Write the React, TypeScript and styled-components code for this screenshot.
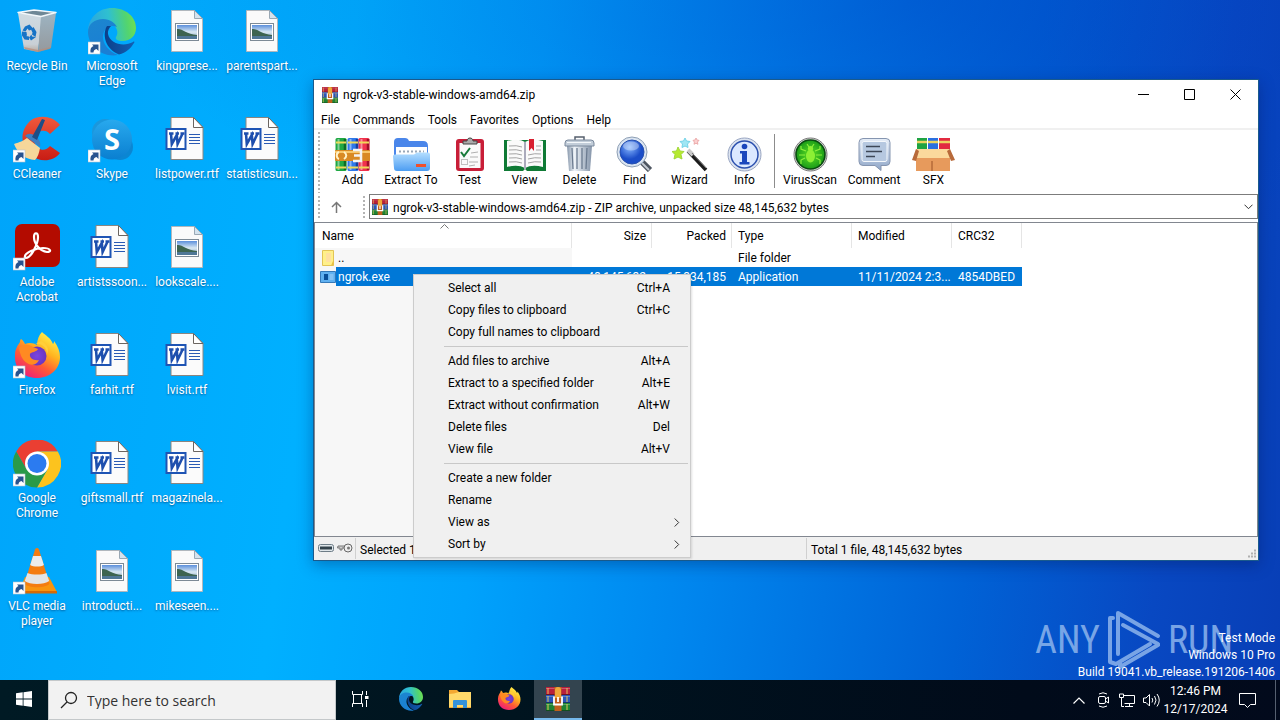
import React from 'react';
import styled, { createGlobalStyle, css } from 'styled-components';

const UI = `Roboto, "Open Sans", sans-serif`;

const Global = createGlobalStyle`
  * { box-sizing: border-box; }
  body { margin: 0; font-family: ${UI}; font-size: 12px; line-height: 16px; color: #000; }
  button, input { font: inherit; color: inherit; margin: 0; padding: 0; border: 0; background: none; text-align: inherit; }
  svg { display: block; flex: none; }
`;

/* ---------- desktop ---------- */

const Screen = styled.div`
  display: flex;
  flex-direction: column;
  min-height: 100vh;
`;

const Desktop = styled.main`
  position: relative;
  flex: 1;
  overflow: hidden;
  background:
    radial-gradient(ellipse 62% 40% at 72% 0, rgba(0, 60, 190, 0.4), rgba(0, 60, 190, 0)),
    linear-gradient(98deg, #00a4fa 0%, #00b0ff 26%, #00a2fc 40%, #0086ee 56%, #0062d6 76%, #0848c2 90%, #083eb6 100%);
`;

const Shortcuts = styled.div`
  display: grid;
  grid-auto-flow: column;
  grid-template-rows: repeat(6, 108px);
  grid-auto-columns: 75px;
  padding-top: 8px;
`;

const Shortcut = styled.button<{ $row: number; $col: number }>`
  grid-row: ${(p) => p.$row};
  grid-column: ${(p) => p.$col};
  display: flex;
  flex-direction: column;
  align-items: center;
  width: 74px;
  gap: 3px;
`;

const ShortcutLabel = styled.span`
  color: #fff;
  line-height: 15px;
  text-align: center;
  white-space: pre;
  text-shadow: 0 1px 2px rgba(0, 40, 90, 0.6);
`;

const Brand = styled.div`
  position: absolute;
  right: 47px;
  bottom: 10px;
  display: flex;
  align-items: center;
  gap: 6px;
  color: #8cb4ec;
  opacity: 0.85;
  font-family: "Roboto Condensed", Roboto, sans-serif;
  font-size: 38px;
  font-weight: 400;
  line-height: 60px;
`;

const BuildInfo = styled.div`
  position: absolute;
  right: 5px;
  bottom: -1px;
  color: #fff;
  text-align: right;
  line-height: 17px;
`;

/* ---------- archive window ---------- */

const Window = styled.section`
  position: absolute;
  left: 313px;
  right: 21px;
  top: 79px;
  bottom: 119px;
  display: flex;
  flex-direction: column;
  border: 1px solid #1a5a8c;
  background: #fff;
  box-shadow: 0 4px 14px rgba(0, 20, 80, 0.35);
`;

const TitleBar = styled.header`
  display: flex;
  align-items: center;
  height: 29px;
  padding-left: 8px;
`;

const Title = styled.h1`
  flex: 1;
  margin: 0 0 0 5px;
  font-size: 12px;
  font-weight: 400;
`;

const CaptionButton = styled.button`
  display: grid;
  place-items: center;
  width: 46px;
  height: 29px;
`;

const MenuBar = styled.nav`
  display: flex;
  align-items: center;
  height: 21px;
  padding: 2px 7px 0;
  gap: 13px;
  border-bottom: 2px solid #f0f0f0;
`;

const ToolBar = styled.div`
  display: flex;
  height: 63px;
  padding: 0 4px;
`;

const Grip = styled.span`
  width: 2px;
  margin-top: 2px;
  background: repeating-linear-gradient(#b4b4b4 0 2px, #fff 2px 4px);
`;

const Tools = styled.div`
  display: flex;
  padding-left: 5px;
`;

const Tool = styled.button<{ $width?: number }>`
  display: flex;
  flex-direction: column;
  align-items: center;
  width: ${(p) => p.$width ?? 55}px;
  padding-top: 6px;
  white-space: nowrap;
`;

const ToolIcon = styled.span`
  display: grid;
  place-items: center;
  height: 36px;
`;

const ToolDivider = styled.span`
  width: 1px;
  height: 54px;
  margin: 4px 3px 0 2px;
  background: #8c8c8c;
`;

const AddressBar = styled.div`
  display: flex;
  height: 29px;
  padding: 1px 0 3px 4px;
`;

const UpButton = styled.button`
  display: grid;
  place-items: center;
  width: 43px;
  padding-right: 11px;
`;

const AddressBox = styled.div`
  flex: 1;
  display: flex;
  align-items: center;
  height: 25px;
  margin-left: 4px;
  padding-left: 2px;
  gap: 5px;
  border: 1px solid #7c7c7c;
`;

const AddressInput = styled.input`
  flex: 1;
  min-width: 0;
  padding-top: 2px;
  outline: 0;
`;

const DropButton = styled.button`
  display: grid;
  place-items: center;
  width: 17px;
  height: 23px;
`;

const FileArea = styled.div`
  flex: 1;
  min-height: 0;
  border: 1px solid #828790;
  background: linear-gradient(#f7f7f7, #f7f7f7) 0 25px / 257px 100% no-repeat #fff;
`;

const FileTable = styled.table`
  table-layout: fixed;
  width: 707px;
  border-collapse: separate;
  border-spacing: 0;
`;

const HeadCell = styled.th<{ $right?: boolean; $sorted?: boolean }>`
  height: 25px;
  padding: ${(p) => (p.$right ? '0 5px 0 0' : '0 0 0 6px')};
  border-right: 1px solid #e5e5e5;
  background: #fff;
  font-weight: 400;
  text-align: ${(p) => (p.$right ? 'right' : 'left')};
  ${(p) => p.$sorted && css`
    padding-left: 7px;
    background: #fff url("data:image/svg+xml,%3Csvg xmlns='http://www.w3.org/2000/svg' width='9' height='5'%3E%3Cpath d='M.5 4.500L4.500.5l4 4' fill='none' stroke='%23777'/%3E%3C/svg%3E") 125px 1px no-repeat;
  `}
`;

const Cell = styled.td<{ $right?: boolean; $name?: boolean; $selected?: boolean }>`
  height: 19px;
  padding: ${(p) => (p.$name ? '0' : p.$right ? '2px 6px 0 0' : '2px 6px 0')};
  line-height: 17px;
  text-align: ${(p) => (p.$right ? 'right' : 'left')};
  white-space: nowrap;
  overflow: hidden;
  text-overflow: clip;
  ${(p) => p.$selected && css`
    color: #fff;
    background: ${p.$name ? 'none' : '#0078d7'};
  `}
`;

const NameCell = styled.div<{ $selected?: boolean }>`
  display: flex;
  align-items: center;
  padding-left: 5px;
  > span {
    flex: 1;
    padding: 2px 0 0 2px;
    background: ${(p) => (p.$selected ? '#0078d7' : 'none')};
  }
`;

const StatusBar = styled.footer`
  display: flex;
  align-items: center;
  height: 23px;
  background: #f0f0f0;
`;

const StatusPane = styled.div<{ $grow?: boolean; $icons?: boolean }>`
  display: flex;
  align-items: center;
  gap: 3px;
  height: 21px;
  padding: ${(p) => (p.$icons ? '0 3px 2px 4px' : '2px 0 0 4px')};
  width: ${(p) => (p.$icons ? '42px' : p.$grow ? 'auto' : '451px')};
  flex: ${(p) => (p.$grow ? 1 : 'none')};
  border-right: ${(p) => (p.$grow ? 0 : '1px solid #d0d0d0')};
`;

/* ---------- context menu ---------- */

const Popup = styled.div`
  position: absolute;
  left: 413px;
  top: 274px;
  display: flex;
  flex-direction: column;
  width: 278px;
  padding: 2px;
  border: 1px solid #ccc;
  background: #f0f0f0;
  box-shadow: 1px 1px 2px rgba(0, 0, 0, 0.12);
`;

const PopupItem = styled.button`
  display: flex;
  align-items: center;
  justify-content: space-between;
  height: 22px;
  padding: 0 18px 0 32px;
`;

const SubArrow = styled.svg`
  margin-right: -10px;
`;

const PopupRule = styled.hr`
  width: 244px;
  height: 1px;
  margin: 3px 0 3px auto;
  border: 0;
  background: #c8c8c8;
`;

/* ---------- taskbar ---------- */

const TaskBar = styled.footer`
  display: flex;
  height: 40px;
  background: linear-gradient(90deg, #001a24 0%, #00141f 40%, #010b1a 80%, #020a1c 100%);
  color: #fff;
`;

const TaskButton = styled.button<{ $active?: boolean }>`
  display: grid;
  place-items: center;
  width: 48px;
  border-bottom: 2px solid ${(p) => (p.$active ? '#76b9ed' : 'transparent')};
  background: ${(p) => (p.$active ? '#33444f' : 'none')};
`;

const PinnedApps = styled.nav`
  display: flex;
  gap: 1px;
  margin-left: 3px;
`;

const SearchBox = styled.label`
  display: flex;
  align-items: center;
  width: 288px;
  padding-left: 11px;
  gap: 9px;
  border: 1px solid #c4c8ca;
  background: #f2f2f2;
  color: #222;
`;

const SearchInput = styled.input`
  flex: 1;
  min-width: 0;
  padding-top: 2px;
  outline: 0;
  font-size: 14px;
  font-family: "Open Sans", sans-serif;
  &::placeholder { color: #333; opacity: 1; }
`;

const Tray = styled.div`
  display: flex;
  margin-left: auto;
`;

const TrayButton = styled.button<{ $wide?: boolean }>`
  display: grid;
  place-items: center;
  width: ${(p) => (p.$wide ? 38 : 24)}px;
`;

const Clock = styled.button`
  width: 65px;
  line-height: 18px;
  text-align: center;
  white-space: nowrap;
`;

const ShowDesktop = styled.button`
  width: 5px;
  margin-left: 9px;
  border-left: 1px solid #566070;
`;

/* ---------- drawings ---------- */

const LinkArrow = () => (
  <g>
    <rect x="0" y="34" width="12" height="12" fill="#fff" stroke="#b8c4d0" strokeWidth=".6" />
    <path d="M2.500 44.500c-.5-3.500.5-5.500 3-6.500L4 36.500h6.500V43L8.500 41C6.500 41.500 5.500 42.500 5.500 44.500z" fill="#28538f" />
  </g>
);

const RecycleBin = () => (
  <svg width="48" height="48" viewBox="0 0 48 48">
    <defs>
      <linearGradient id="binL" x2="0" y2="1"><stop stopColor="#cfdbe2" /><stop offset=".8" stopColor="#c9d0d6" /><stop offset="1" stopColor="#b9a99c" /></linearGradient>
      <linearGradient id="binR" x2="0" y2="1"><stop stopColor="#9db4c2" /><stop offset="1" stopColor="#95999d" /></linearGradient>
    </defs>
    <path d="M5 5l24 3-4 36-14-3z" fill="url(#binL)" />
    <path d="M43 5L28 8l-3 36 13-4z" fill="url(#binR)" />
    <path d="M5 4.500l16-2.500 22 2.500-15 4z" fill="#6f8896" stroke="#f2f7fa" strokeWidth="1.500" strokeLinejoin="round" />
    <path d="M11 39l14 3 13-3-1 2-12 3-13-3z" fill="#b98c78" opacity=".7" />
    <g fill="#1673c6">
      <path d="M12 18.500l4.500-2 4 4.500-4.500 1.500-1.500-2-2 3-3-1z" />
      <path d="M20.500 19l3 5-1 5-3.500-2.500.5-2-1.500-3z" />
      <path d="M23 29l-5 3.500-2-3 2.500-3 .5 2z" />
      <path d="M9 23.500l4.500.5.5 3.500-1 .500 3 .500v3.500l-4.500-.5-2.500-4z" />
    </g>
  </svg>
);

const EdgeLogo = ({ size = 48, link = false }) => (
  <svg width={size} height={size} viewBox="0 0 48 48">
    <defs>
      <linearGradient id={`eg${size}`} x1="0" y1=".5" x2="1" y2=".4"><stop stopColor="#2aa5e0" /><stop offset=".45" stopColor="#2fc0d0" /><stop offset=".8" stopColor="#52d470" /><stop offset="1" stopColor="#6fe052" /></linearGradient>
      <linearGradient id={`eb${size}`} x2=".3" y2="1"><stop stopColor="#1c86cf" /><stop offset="1" stopColor="#1a7fd4" /></linearGradient>
      <linearGradient id={`ed${size}`} x2="1"><stop stopColor="#0c3f8a" /><stop offset="1" stopColor="#1260b4" /></linearGradient>
    </defs>
    <path d="M0 22C1 9 11 0 24 0c14 0 24 9 24 20 0 8-6 13-13 13-6 0-8-2-7-4 3-4 1-11-5-14-9-4-18-1-23 7z" fill={`url(#eg${size})`} />
    <path d="M0 24c0-8 7-13 15-13 7 0 12 4 14 8-4-2-9-1-12 3-5 7-1 20 13 25C14 50 0 38 0 24z" fill={`url(#eb${size})`} />
    <path d="M19 18c-5 8-2 23 12 28.500C38 45 43 40 46 35c1-1 0-2-1-1-9 5-23 2-25-8-.5-3 1-6 3-8z" fill={`url(#ed${size})`} />
    {link && <LinkArrow />}
  </svg>
);

const ImageFile = () => (
  <svg width="48" height="48" viewBox="0 0 48 48">
    <defs><linearGradient id="sky" x2="0" y2="1"><stop stopColor="#5b8fdc" /><stop offset=".5" stopColor="#d9e8f2" /><stop offset="1" stopColor="#7f9fbf" /></linearGradient></defs>
    <path d="M8.500 2.500h23l8 8v33h-31z" fill="#fafafa" stroke="#b0b7bd" />
    <path d="M31.500 2.500v8h8z" fill="#d5e3ee" stroke="#9aa8b4" />
    <rect x="12.500" y="15.500" width="23" height="17" fill="#fff" stroke="#7d8a96" />
    <rect x="14" y="17" width="20" height="14" fill="url(#sky)" />
    <path d="M14 21c5-1 9 5 20 6v1H14z" fill="#3d6450" />
    <path d="M14 28h20v3H14z" fill="#4f7796" />
  </svg>
);

const WordFile = () => (
  <svg width="48" height="48" viewBox="0 0 48 48">
    <path d="M8 1.500h22l10 10v32H8z" fill="#fbfbfb" stroke="#8a8580" />
    <path d="M30.500 1.500v10H40z" fill="#fff" stroke="#6b6560" />
    <path d="M26 18.500h11M26 21.500h11M26 24.500h11M26 27.500h11" stroke="#2a5ab4" />
    <rect x="3.500" y="13" width="19" height="20" fill="#fff" stroke="#1e54b4" strokeWidth="2" />
    <path d="M6 17.500h4.500M8 17.500L8.800 28l5-9 .8 9 5-10.500M17.500 17.500h4M12.500 17.500h3.500" fill="none" stroke="#1e4fae" strokeWidth="2.600" />
  </svg>
);

const CCleaner = () => (
  <svg width="48" height="48" viewBox="0 0 48 48">
    <defs><linearGradient id="cc" x2="0" y2="1"><stop stopColor="#f0593c" /><stop offset="1" stopColor="#c81c14" /></linearGradient></defs>
    <path d="M47 9L37 18c-2-3-6-4-9-3-8 2-9 12-3 17 4 3 9 2 12-2l10 7c-7 9-21 10-30 1C8 29 6 16 17 5c9-7 23-5 30 4z" fill="url(#cc)" />
    <path d="M1 28c6-2 9-3 13-6l13 10c-1 5-2 9-5 12C12 43 5 38 1 28z" fill="#f6d79a" />
    <path d="M12 20c3-3 6-3 10 0s6 6 5 11z" fill="#3d7fc2" />
    <path d="M29 3l3 1-8 20-5-3z" fill="#1d4e86" />
    <LinkArrow />
  </svg>
);

const Skype = () => (
  <svg width="48" height="48" viewBox="0 0 48 48">
    <defs><linearGradient id="sk" x2="0" y2="1"><stop stopColor="#28a9ee" /><stop offset="1" stopColor="#0a7fd0" /></linearGradient></defs>
    <circle cx="17" cy="16" r="13" fill="#1b97dc" /><circle cx="32" cy="31" r="13" fill="#0b86d2" />
    <circle cx="24" cy="23.500" r="20" fill="url(#sk)" />
    <text x="24" y="33.500" textAnchor="middle" fontFamily="Open Sans, sans-serif" fontWeight="700" fontSize="29" fill="#fff">S</text>
    <LinkArrow />
  </svg>
);

const Acrobat = () => (
  <svg width="48" height="48" viewBox="0 0 48 48">
    <rect x="2" y="0" width="45" height="43" rx="7" fill="#b30b00" />
    <path d="M12 33c-1-4 11-9 18-9 8 0 9 4 4 4-7-1-13-8-13-15 0-5 4-5 4 0 0 7-7 21-12 21-1 0-1.500-.5-1-1z" fill="none" stroke="#fff" strokeWidth="2.200" strokeLinejoin="round" />
    <LinkArrow />
  </svg>
);

const Firefox = ({ size = 48, link = false }) => (
  <svg width={size} height={size} viewBox="0 0 48 48">
    <defs>
      <linearGradient id={`ff${size}`} x1=".85" y1=".1" x2=".3" y2="1"><stop stopColor="#fff04a" /><stop offset=".35" stopColor="#ffb31f" /><stop offset=".65" stopColor="#ff5b35" /><stop offset="1" stopColor="#ee1f78" /></linearGradient>
      <radialGradient id={`fp${size}`}><stop stopColor="#7a45e0" /><stop offset="1" stopColor="#6a35c0" /></radialGradient>
    </defs>
    <path d="M29 0c3 3 9 6 11 12 1-1 1-2 1-3 4 5 6 11 6 16 0 12-10 21-23 21S1 37 2 23C2 17 5 13 7 10c0-1 0-2 1-3 2 1 3 3 4 5 4-2 9-1 12 1 0-5 2-10 5-13z" fill={`url(#ff${size})`} />
    <circle cx="24" cy="24" r="9.500" fill={`url(#fp${size})`} />
    <path d="M6 16c4-4 9-4 14-1l5 2c-1 3-7 3-8 5-1 4 4 7 9 6-2 5-8 6-12 3-5-3-7-9-8-15z" fill="#ff8a22" />
    <path d="M22 12c7-1 12 4 12 10 3-5-1-11-6-13z" fill="#ffcf3a" />
    {link && <LinkArrow />}
  </svg>
);

const Chrome = () => (
  <svg width="48" height="48" viewBox="0 0 48 48">
    <path d="M3.200 11.500A24 24 0 0 1 44.800 11.500H24L13.600 29.500z" fill="#ea3f32" />
    <path d="M44.800 11.500A24 24 0 0 1 24 47.500L34.400 29.500 24 11.500z" fill="#fcc31e" />
    <path d="M24 47.500A24 24 0 0 1 3.200 11.500L13.600 29.500h20.800z" fill="#2a9a48" />
    <circle cx="24" cy="23.500" r="12" fill="#fff" />
    <circle cx="24" cy="23.500" r="9.500" fill="#2b7bf0" />
    <LinkArrow />
  </svg>
);

const Vlc = () => (
  <svg width="48" height="48" viewBox="0 0 48 48">
    <path d="M12 29h24l8 15H6z" fill="#f9940f" />
    <path d="M6 43h38v2.500H6z" fill="#d76a04" />
    <path d="M22 1.500c1-2 3-2 4 0l10.500 34c-3 5-22 5-25 0z" fill="#f47c10" />
    <path d="M20 8h8l2.900 9c-3 2-10.500 2-13.700 0z" fill="#ececec" />
    <path d="M14.500 25c5 2 14 2 19 0l2.700 8c-5 4-19.500 4-24.500 0z" fill="#e4e4e4" />
    <LinkArrow />
  </svg>
);

const RarIcon = ({ size = 16 }) => (
  <svg width={size} height={size} viewBox="0 0 24 24">
    <rect y="0" width="24" height="8" fill="#b8203c" /><rect y="8" width="24" height="8" fill="#2a56b8" /><rect y="16" width="24" height="8" fill="#1e8434" />
    <path d="M0 1.500h24M0 9.500h24M0 17.500h24" stroke="#fff" strokeOpacity=".25" />
    <path d="M0 7.500h24M0 15.500h24M0 23.500h24" stroke="#000" strokeOpacity=".4" />
    <path d="M2 1v6M2 9v6M2 17v6M21 1v6M21 9v6M21 17v6" stroke="#e8c85a" strokeWidth="1.200" strokeOpacity=".8" />
    <rect x="8.500" width="7" height="24" fill="#c0601c" />
    <path d="M9 3q0-3 3-3t3 3v8H9z" fill="#f0a83a" />
    <path d="M8 9.500v8h8v-8M12 10v5" fill="none" stroke="#fff" strokeWidth="1.800" />
  </svg>
);

const AddIcon = () => (
  <svg width="35" height="35" viewBox="0 0 35 35">
    {[['#1fa843', '#0c6b25', 0], ['#2f78ea', '#163f9c', 12], ['#f0324c', '#a01028', 23]].map(([a, b, x]) => (
      <g key={String(x)} transform={`translate(${x} 0)`}>
        <rect x=".5" y="1" width="11" height="33" rx="1.500" fill={String(a)} />
        <path d="M10 2v31" stroke={String(b)} strokeWidth="2.500" />
        <path d="M3.500 2v31" stroke="#fff" strokeOpacity=".45" strokeWidth="2" />
        <path d="M1 5.500h10M1 30.500h10" stroke="#efd95a" strokeWidth="2" />
      </g>
    ))}
    <rect y="13" width="35" height="11" rx="1" fill="#d98a24" />
    <path d="M0 15h35" stroke="#f8c76a" strokeWidth="2" />
    <path d="M4 15c-3 1-3 6 0 7M9 15c3 2 3 5 0 7" fill="none" stroke="#fff2c8" strokeWidth="2" />
    <path d="M18 13h8v11h-8M19 18.500h6" fill="none" stroke="#f4f4f4" strokeWidth="2.500" />
  </svg>
);

const ExtractIcon = () => (
  <svg width="37" height="35" viewBox="0 0 37 35">
    <defs><linearGradient id="exf" x2="0" y2="1"><stop stopColor="#b4deff" /><stop offset="1" stopColor="#4c9df2" /></linearGradient></defs>
    <path d="M1 5q0-4 4-4h7q3 0 4 3h14q5 0 5 5v20H1z" fill="#4a86ea" />
    <rect x="3" y="10" width="31" height="12" fill="#fff" />
    <path d="M6 14.500h25" stroke="#9aa8b8" strokeWidth="2" strokeDasharray="2 2" />
    <path d="M0 19q0-1.500 2-1.500h19l3-2h11q2 0 2 2V31q0 3-3 3H4q-3 0-3-3z" fill="url(#exf)" />
    <rect x="23" y="27" width="10" height="3" fill="#f0502c" />
  </svg>
);

const TestIcon = () => (
  <svg width="30" height="35" viewBox="0 0 30 35">
    <rect x="1" y="2" width="28" height="32" rx="3" fill="#c81e38" />
    <rect x="4.500" y="6" width="21" height="25" fill="#fafafa" />
    <path d="M8 7V4h4c0-4 6-4 6 0h4v3z" fill="#aaa" stroke="#444" />
    <path d="M6 15l3 4 6-8" fill="none" stroke="#187a3a" strokeWidth="2" />
    <path d="M16 16l7-1M15 20h8M14 25h9M14 29l6-1" stroke="#b0b0b0" />
    <rect x="6.500" y="22.500" width="6" height="5" fill="none" stroke="#c0c0c0" />
  </svg>
);

const ViewIcon = () => (
  <svg width="42" height="35" viewBox="0 0 42 35">
    <path d="M0 3h42v31H23l-2-2-2 2H0z" fill="#0f7a35" />
    <path d="M3 4q12-3 18 1v26q-7-4-18-1zM39 4q-12-3-18 1v26q7-4 18-1z" fill="#fafafa" />
    <path d="M21 5v27" stroke="#aab" strokeWidth="2" />
    <path d="M5 9q8-1 13 1M5 13q8-1 13 1M5 17q8-1 13 1M5 21q8-1 13 1M5 25q8-1 13 1M32 9h5M32 13h5M24 18q7-2 13-1M24 22q7-2 13-1M24 26q7-2 13-1" stroke="#a4a4a4" fill="none" />
    <path d="M25 2h5v12l-2.500-3-2.500 3z" fill="#d81f30" />
  </svg>
);

const DeleteIcon = () => (
  <svg width="31" height="36" viewBox="0 0 31 36">
    <defs><linearGradient id="del"><stop stopColor="#8696aa" /><stop offset=".3" stopColor="#eef3f8" /><stop offset="1" stopColor="#8595aa" /></linearGradient></defs>
    <path d="M11 4V1h9v3" fill="none" stroke="#555f6c" strokeWidth="1.500" />
    <path d="M3 10h25l-2 25H5z" fill="url(#del)" />
    <path d="M8 12l1 21M13 12v21M18 12v21M23 12l-1 21" stroke="#6b7b90" strokeWidth="1.300" />
    <path d="M1 7q0-3 3-3h23q3 0 3 3v3H1z" fill="#c2cdd9" stroke="#7a899c" />
    <path d="M3 6.500h24" stroke="#f4f8fb" />
  </svg>
);

const FindIcon = () => (
  <svg width="37" height="36" viewBox="0 0 37 36">
    <defs><radialGradient id="lens" cx=".4" cy=".3"><stop stopColor="#86b6ff" /><stop offset="1" stopColor="#1b4dc8" /></radialGradient></defs>
    <path d="M25 25l9 9" stroke="#4e5661" strokeWidth="6" />
    <path d="M24 25l9 9" stroke="#c6ccd4" strokeWidth="2" />
    <circle cx="16" cy="16" r="15" fill="#dbe5f1" stroke="#8fa0b5" />
    <circle cx="16" cy="16" r="12" fill="url(#lens)" stroke="#264fae" />
    <ellipse cx="15" cy="10" rx="8" ry="4.500" fill="#fff" opacity=".35" />
  </svg>
);

const WizardIcon = () => (
  <svg width="36" height="35" viewBox="0 0 36 35">
    <path d="M16 14l18 19" stroke="#1c1c1c" strokeWidth="3.600" />
    <path d="M16 13l5 5" stroke="#c9c9c9" strokeWidth="4" />
    <path d="M20 16l14 15" stroke="#777" />
    <path d="M6 10l2 4 4 .5-3 3 1 4.500-4-2-4 2 1-4.500-3-3L4.500 14z" fill="#b6ea30" stroke="#a2d83a" />
    <path d="M13 1l1.500 3 3.500.5-2.500 2.500.5 3.500-3-1.500-3 1.500.5-3.500L8 4.500 11.500 4z" fill="#9fe6f4" stroke="#74d3e8" />
    <path d="M24 1l1 2 2 .4-1.500 1.600.4 2.300L24 6.200l-2 1.100.4-2.300L21 3.400l2-.4z" fill="#fbd0d0" stroke="#e8a0a0" strokeWidth=".8" />
  </svg>
);

const InfoIcon = () => (
  <svg width="35" height="35" viewBox="0 0 35 35">
    <circle cx="17.500" cy="17.500" r="16.500" fill="#dde4f0" stroke="#98a5c2" />
    <circle cx="17.500" cy="17.500" r="13.500" fill="#dbe8ff" stroke="#2a4fae" strokeWidth="1.500" />
    <circle cx="17.500" cy="9.500" r="2.800" fill="#1a46bc" />
    <path d="M13 14h7v11h2.500v2.500h-10V25H15v-8.500h-2z" fill="#1a46bc" />
  </svg>
);

const VirusIcon = () => (
  <svg width="35" height="35" viewBox="0 0 35 35">
    <defs><radialGradient id="vir"><stop stopColor="#5fe024" /><stop offset="1" stopColor="#1a9c18" /></radialGradient></defs>
    <circle cx="17.500" cy="17.500" r="16.500" fill="#d6d6d6" stroke="#777" />
    <circle cx="17.500" cy="17.500" r="14.500" fill="url(#vir)" stroke="#0a4a10" strokeWidth="1.600" />
    <g stroke="#8ef03c" fill="none" strokeWidth="1.200"><path d="M13 14L8 12V9M12 18H6M12 21l-4 2v4M22 14l5-2V9M23 18h6M23 21l4 2v4M16 10l-2-3M19 10l2-3" /></g>
    <ellipse cx="17.500" cy="19" rx="4.500" ry="6.500" fill="#8cf034" /><circle cx="17.500" cy="11.500" r="2.600" fill="#8cf034" />
  </svg>
);

const CommentIcon = () => (
  <svg width="33" height="35" viewBox="0 0 33 35">
    <defs><linearGradient id="com" x2="0" y2="1"><stop stopColor="#e7eef8" /><stop offset="1" stopColor="#8fa6c8" /></linearGradient></defs>
    <path d="M5 1.500h23q4 0 4 4v19q0 4-4 4h-5v5l-6-5H5q-4 0-4-4v-19q0-4 4-4z" fill="url(#com)" stroke="#8595b0" />
    <rect x="4" y="4.500" width="25" height="20" rx="2" fill="#b6c8e0" stroke="#f4f8fc" />
    <path d="M8 9.500h14M8 14.500h16M8 19.500h9" stroke="#3d4757" strokeWidth="1.500" />
  </svg>
);

const SfxIcon = () => (
  <svg width="43" height="35" viewBox="0 0 43 35">
    <path d="M5 1h10v14H5z" fill="#1fa443" /><path d="M16 1h10v14H16z" fill="#2b6fe0" /><path d="M27 1h11v14H27z" fill="#e22a40" />
    <path d="M5 5h10M16 5h10M27 5h11" stroke="#ecd460" strokeWidth="2.500" />
    <path d="M4 12h34v22H4z" fill="#e79a5c" />
    <path d="M4 12h34l1 9H3z" fill="#fbd99c" />
    <path d="M4 12L0 23l4 1 3-10zM38 12l5 11-4 1-4-10z" fill="#b86a3a" />
    <path d="M20 24v10" stroke="#9c5226" />
  </svg>
);

const FolderSmall = () => (
  <svg width="16" height="16" viewBox="0 0 16 16"><path d="M2.500.500h11v15h-11z" fill="#fff08a" stroke="#e3c455" /><path d="M6 3h5v9H6z" fill="#ffe0a0" /><path d="M13.500 10v5.500H11z" fill="#e8bf45" /></svg>
);

const ExeSmall = () => (
  <svg width="16" height="16" viewBox="0 0 16 16"><path d="M.500 2.500h15v11H.500z" fill="#5fb0f0" stroke="#3579b8" /><path d="M4 5h4v6H4z" fill="#094f98" /><path d="M9.500 6h4M9.500 8h4M9.500 10h4" stroke="#a8d4f8" /></svg>
);

const Chevron = () => (
  <svg width="9" height="6" viewBox="0 0 9 6"><path d="M.500.700l4 4 4-4" fill="none" stroke="#333" /></svg>
);

const WindowsLogo = () => (
  <svg width="16" height="16" viewBox="0 0 16 16"><path d="M0 2.300L6.700 1.300v6.200H0zM7.500 1.200L16 0v7.500H7.500zM0 8.400h6.700v6.300L0 13.700zM7.500 8.400H16V16l-8.500-1.200z" fill="#fff" /></svg>
);

const Explorer = () => (
  <svg width="22" height="20" viewBox="0 0 22 20"><path d="M0 1h8l2 2h12v16H0z" fill="#f3a832" /><path d="M0 5q5 0 10-2h12v15H0z" fill="#ffd96a" /><path d="M4 19v-7q0-1 1-1h12q1 0 1 1v7h-4v-3H8v3z" fill="#3492da" /></svg>
);

const TaskView = () => (
  <svg width="17" height="16" viewBox="0 0 17 16"><path d="M.500 0v3.500h10V0M.500 16v-3.500h10V16M1.500 3.500v9M9.500 3.500v9M14.500 0v4M14.500 9v7" fill="none" stroke="#fff" /><path d="M13 5h3.500v3H13z" fill="#fff" /></svg>
);

const BrandMark = () => (
  <svg width="56" height="60" viewBox="0 0 56 60" fill="none" stroke="currentColor" strokeWidth="4" strokeLinejoin="round" strokeLinecap="round">
    <path d="M7 8H4v44l6 2 34-20" />
    <path d="M12 44V3l40 23M17 15l35 19" />
    <path d="M52 35L14 57v-4" />
  </svg>
);

/* ---------- data ---------- */

const shortcuts: [number, number, string, React.ComponentType<any>, boolean?][] = [
  [1, 1, 'Recycle Bin', RecycleBin], [2, 1, 'CCleaner', CCleaner], [3, 1, 'Adobe\nAcrobat', Acrobat],
  [4, 1, 'Firefox', Firefox, true], [5, 1, 'Google\nChrome', Chrome], [6, 1, 'VLC media\nplayer', Vlc],
  [1, 2, 'Microsoft\nEdge', EdgeLogo, true], [2, 2, 'Skype', Skype], [3, 2, 'artistssoon...', WordFile],
  [4, 2, 'farhit.rtf', WordFile], [5, 2, 'giftsmall.rtf', WordFile], [6, 2, 'introducti...', ImageFile],
  [1, 3, 'kingprese...', ImageFile], [2, 3, 'listpower.rtf', WordFile], [3, 3, 'lookscale....', ImageFile],
  [4, 3, 'lvisit.rtf', WordFile], [5, 3, 'magazinela...', WordFile], [6, 3, 'mikeseen....', ImageFile],
  [1, 4, 'parentspart...', ImageFile], [2, 4, 'statisticsun...', WordFile],
];

const tools: [string, React.ComponentType, number?][] = [
  ['Add', AddIcon], ['Extract To', ExtractIcon, 62], ['Test', TestIcon], ['View', ViewIcon],
  ['Delete', DeleteIcon], ['Find', FindIcon], ['Wizard', WizardIcon], ['Info', InfoIcon],
];
const extraTools: [string, React.ComponentType, number?][] = [
  ['VirusScan', VirusIcon, 64], ['Comment', CommentIcon, 64], ['SFX', SfxIcon],
];

const menu: ([string, string?] | null)[] = [
  ['Select all', 'Ctrl+A'], ['Copy files to clipboard', 'Ctrl+C'], ['Copy full names to clipboard'], null,
  ['Add files to archive', 'Alt+A'], ['Extract to a specified folder', 'Alt+E'],
  ['Extract without confirmation', 'Alt+W'], ['Delete files', 'Del'], ['View file', 'Alt+V'], null,
  ['Create a new folder'], ['Rename'], ['View as', '>'], ['Sort by', '>'],
];

const ToolList = ({ items }: { items: typeof tools }) => (
  <>
    {items.map(([label, Icon, width]) => (
      <Tool key={label} $width={width}><ToolIcon><Icon /></ToolIcon>{label}</Tool>
    ))}
  </>
);

const ArchiveWindow = () => (
  <Window>
    <TitleBar>
      <RarIcon />
      <Title>ngrok-v3-stable-windows-amd64.zip</Title>
      <CaptionButton aria-label="Minimize"><svg width="11" height="11"><path d="M0 5.500h11" stroke="#000" /></svg></CaptionButton>
      <CaptionButton aria-label="Maximize"><svg width="11" height="11"><path d="M.500.500h10v10H.500z" fill="none" stroke="#000" /></svg></CaptionButton>
      <CaptionButton aria-label="Close"><svg width="11" height="11"><path d="M.500.500l10 10M10.500.500l-10 10" stroke="#000" /></svg></CaptionButton>
    </TitleBar>
    <MenuBar>
      {['File', 'Commands', 'Tools', 'Favorites', 'Options', 'Help'].map((m) => <button key={m}>{m}</button>)}
    </MenuBar>
    <ToolBar>
      <Grip />
      <Tools>
        <ToolList items={tools} />
        <ToolDivider />
        <ToolList items={extraTools} />
      </Tools>
    </ToolBar>
    <AddressBar>
      <Grip />
      <UpButton aria-label="Up one level"><svg width="11" height="12"><path d="M5.500 12V1.500M1 6l4.500-4.500L10 6" fill="none" stroke="#777" strokeWidth="1.500" /></svg></UpButton>
      <Grip />
      <AddressBox>
        <RarIcon />
        <AddressInput aria-label="Location" defaultValue="ngrok-v3-stable-windows-amd64.zip - ZIP archive, unpacked size 48,145,632 bytes" />
        <DropButton aria-label="Show locations"><Chevron /></DropButton>
      </AddressBox>
    </AddressBar>
    <FileArea>
      <FileTable>
        <colgroup>{[257, 80, 80, 120, 100, 70].map((w, i) => <col key={i} width={w} />)}</colgroup>
        <thead>
          <tr>
            <HeadCell $sorted>Name</HeadCell><HeadCell $right>Size</HeadCell><HeadCell $right>Packed</HeadCell>
            <HeadCell>Type</HeadCell><HeadCell>Modified</HeadCell><HeadCell>CRC32</HeadCell>
          </tr>
        </thead>
        <tbody>
          <tr>
            <Cell $name><NameCell><FolderSmall /><span>..</span></NameCell></Cell>
            <Cell /><Cell /><Cell>File folder</Cell><Cell /><Cell />
          </tr>
          <tr>
            <Cell $name $selected><NameCell $selected><ExeSmall /><span>ngrok.exe</span></NameCell></Cell>
            <Cell $right $selected>48,145,632</Cell><Cell $right $selected>15,334,185</Cell>
            <Cell $selected>Application</Cell><Cell $selected>11/11/2024 2:3...</Cell><Cell $selected>4854DBED</Cell>
          </tr>
        </tbody>
      </FileTable>
    </FileArea>
    <StatusBar>
      <StatusPane $icons>
        <svg width="16" height="8"><rect x=".5" y=".5" width="15" height="7" rx="2" fill="#dfe6ea" stroke="#6d7c86" /><path d="M2 4h12" stroke="#33424b" strokeWidth="3" /></svg>
        <svg width="16" height="10"><path d="M9 3H1l-.5 2H3v2h2V5h4" fill="#ccc" stroke="#777" /><circle cx="11" cy="5" r="4" fill="#eee" stroke="#666" /><circle cx="11.500" cy="5" r="1.500" fill="#777" /></svg>
      </StatusPane>
      <StatusPane>Selected 1 file, 48,145,632 bytes</StatusPane>
      <StatusPane $grow>Total 1 file, 48,145,632 bytes</StatusPane>
      <svg width="12" height="22"><path d="M8 12.500h2M5 15.500h2M8 15.500h2M2 18.500h2M5 18.500h2M8 18.500h2" stroke="#b0b0b0" strokeWidth="2" /></svg>
    </StatusBar>
  </Window>
);

export default function App() {
  return (
    <Screen>
      <Global />
      <Desktop>
        <Shortcuts>
          {shortcuts.map(([row, col, label, Icon, link]) => (
            <Shortcut key={label} $row={row} $col={col}>
              {link ? <Icon link /> : <Icon />}
              <ShortcutLabel>{label}</ShortcutLabel>
            </Shortcut>
          ))}
        </Shortcuts>
        <Brand><span>ANY</span><BrandMark /><span>RUN</span></Brand>
        <BuildInfo>Test Mode<br />Windows 10 Pro<br />Build 19041.vb_release.191206-1406</BuildInfo>
        <ArchiveWindow />
        <Popup role="menu">
          {menu.map((item, i) => item === null ? <PopupRule key={i} /> : (
            <PopupItem key={i} role="menuitem">
              <span>{item[0]}</span>
              {item[1] === '>'
                ? <SubArrow width="6" height="9"><path d="M.700.500l4 4-4 4" fill="none" stroke="#333" /></SubArrow>
                : <span>{item[1]}</span>}
            </PopupItem>
          ))}
        </Popup>
      </Desktop>
      <TaskBar>
        <TaskButton aria-label="Start"><WindowsLogo /></TaskButton>
        <SearchBox>
          <svg width="18" height="18" viewBox="0 0 18 18"><circle cx="11" cy="7" r="5.500" fill="none" stroke="#222" strokeWidth="1.300" /><path d="M7 11l-6 6" stroke="#222" strokeWidth="1.300" /></svg>
          <SearchInput aria-label="Search" placeholder="Type here to search" />
        </SearchBox>
        <TaskButton aria-label="Task View"><TaskView /></TaskButton>
        <PinnedApps>
          <TaskButton aria-label="Microsoft Edge"><EdgeLogo size={24} /></TaskButton>
          <TaskButton aria-label="File Explorer"><Explorer /></TaskButton>
          <TaskButton aria-label="Firefox"><Firefox size={24} /></TaskButton>
          <TaskButton $active aria-label="Archive"><RarIcon size={24} /></TaskButton>
        </PinnedApps>
        <Tray>
          <TrayButton aria-label="Show hidden icons"><svg width="12" height="7"><path d="M.500 6.500L6 1l5.500 5.500" fill="none" stroke="#fff" strokeWidth="1.200" /></svg></TrayButton>
          <TrayButton aria-label="Camera"><svg width="13" height="16" fill="none" stroke="#fff"><rect x="1.500" y="4.500" width="7" height="7" rx="1.500" /><path d="M8.500 7l3-2v6l-3-2M2 2q4-2.500 8 0M2 14q4 2.500 8 0" /></svg></TrayButton>
          <TrayButton aria-label="Network"><svg width="17" height="14" fill="none" stroke="#fff"><path d="M5 2.500h10.500v8H5.500M10.500 10.500v3M6 13.500h8M2.500 5v8.500H5M.500 1v3.500h4V1z" /></svg></TrayButton>
          <TrayButton aria-label="Volume"><svg width="17" height="14" fill="none" stroke="#fff"><path d="M.500 5v4.500H3l3.500 3.500V1.500L3 5zM9 5q1.500 2 0 4.500M11.500 3q3 4 0 8.500M14 1q4.500 6 0 12.500" /></svg></TrayButton>
          <Clock>12:46 PM<br />12/17/2024</Clock>
          <TrayButton $wide aria-label="Notifications"><svg width="17" height="17" fill="none" stroke="#fff"><path d="M.500 1.500h16v11h-5l-3 3-3-3h-5z" /></svg></TrayButton>
          <ShowDesktop aria-label="Show desktop" />
        </Tray>
      </TaskBar>
    </Screen>
  );
}
